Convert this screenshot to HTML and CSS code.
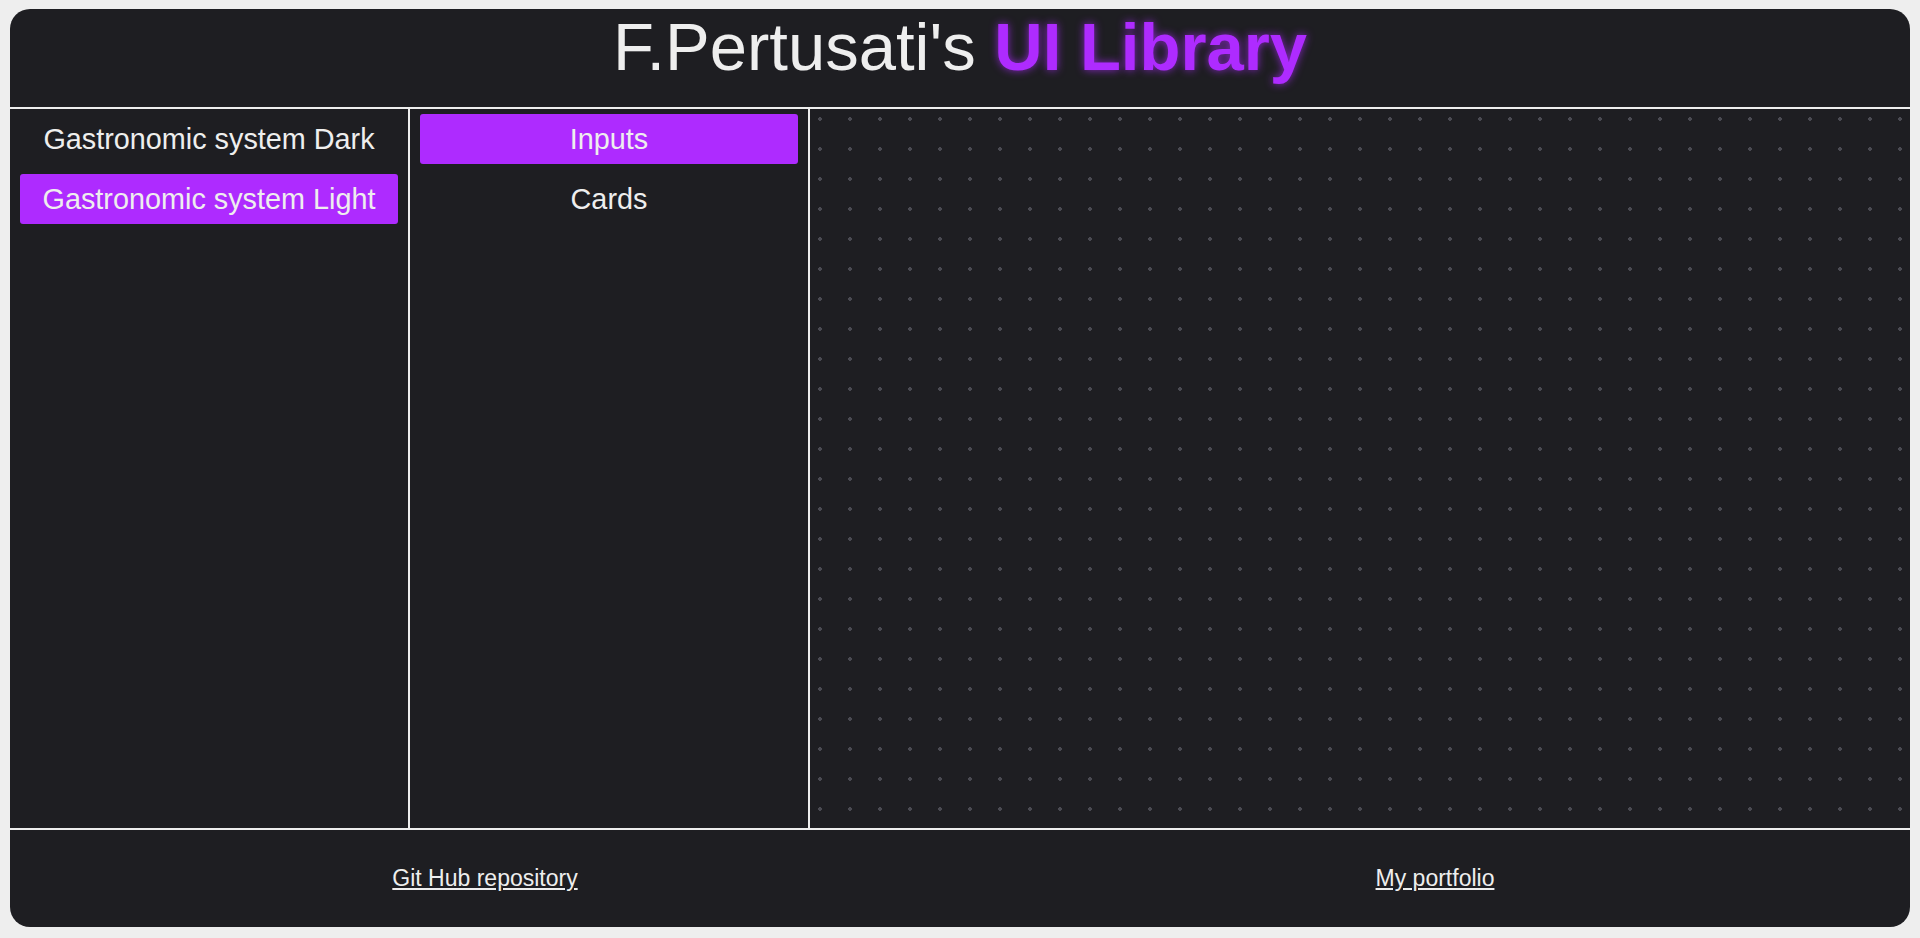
FILE: index.html
```html
<!DOCTYPE html>
<html lang="en">
<head>
    <meta charset="UTF-8">
    <meta name="viewport" content="width=device-width, initial-scale=1.0">
    <title>F.Pertusati's UI Library</title>
    <link rel="stylesheet" href="styles.css">
</head>
<body>
<div id="container">
    <header class="cabecera">
        <h1>F.Pertusati's <span class="resaltado">UI Library</span></h1>
    </header>

    <main class="principal">
        <!-- Sistemas de diseño -->
        <nav class="columna">
            <div class="item">Gastronomic system Dark</div>
            <div class="item activo">Gastronomic system Light</div>
        </nav>

        <!-- Componentes del sistema -->
        <nav class="columna">
            <div class="item activo">Inputs</div>
            <div class="item">Cards</div>
        </nav>

        <!-- Lienzo de vista previa -->
        <section class="lienzo"></section>
    </main>

    <footer class="pie">
        <a href="#">Git Hub repository</a>
        <a href="#">My portfolio</a>
    </footer>
</div>
</body>
</html>
```

FILE: styles.css
```css
body {
    font-family: "Liberation Sans", Arial, sans-serif;
    background-color: #eeeeee;
    margin: 0;
    padding: 9px 10px 0 10px;
}
#container {
    height: 918px;
    background-color: #1e1e22;
    border-radius: 20px;
    overflow: hidden;
    display: flex;
    flex-direction: column;
    color: #eeeeee;
}
.cabecera {
    height: 98px;
    border-bottom: 2px solid #eeeeee;
    flex-shrink: 0;
}
h1 {
    margin: 0;
    text-align: center;
    font-size: 67px;
    font-weight: normal;
    line-height: 76px;
}
.resaltado {
    font-weight: bold;
    color: #ae2bff;
    text-shadow: 0 0 8px rgba(174, 43, 255, 0.75);
}
.principal {
    flex: 1;
    display: grid;
    grid-template-columns: 400px 400px 1fr;
    min-height: 0;
}
.columna {
    border-right: 2px solid #eeeeee;
    padding: 0 10px;
}
.item {
    height: 50px;
    margin: 5px 0 10px;
    display: flex;
    align-items: center;
    justify-content: center;
    font-size: 28.8px;
    border-radius: 3px;
    cursor: pointer;
}
.item.activo {
    background-color: #ae2bff;
}
.lienzo {
    background-image: radial-gradient(circle, #4a4a52 1.6px, transparent 2px);
    background-size: 30px 30px;
    background-position: -5px -5px;
}
.pie {
    height: 97px;
    border-top: 2px solid #eeeeee;
    flex-shrink: 0;
    display: grid;
    grid-template-columns: 1fr 1fr;
    align-items: center;
    justify-items: center;
}
.pie a {
    color: #eeeeee;
    font-size: 23px;
}
```
